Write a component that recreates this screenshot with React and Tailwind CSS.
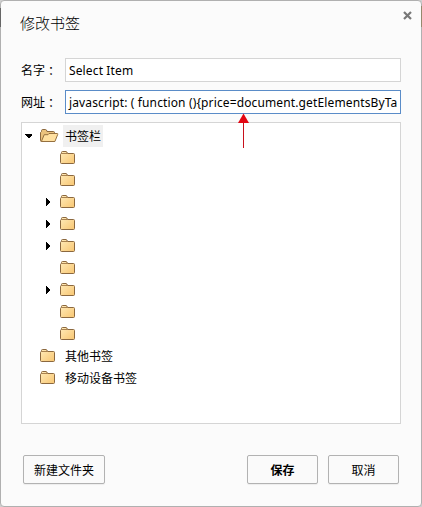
const cjk = "font-['Noto_Sans_CJK_SC',sans-serif]";

function Folder() {
  return (
    <svg width="16" height="16" viewBox="0 0 16 16" className="block shrink-0">
      <defs>
        <linearGradient id="folder" x1="0" y1="0" x2="1" y2="1">
          <stop offset="0" stopColor="#ffebb9" />
          <stop offset="1" stopColor="#f8c672" />
        </linearGradient>
      </defs>
      <path d="M1.5 3.5V2.5Q1.5 1.5 2.5 1.5H6Q7 1.5 7.5 3.5H13.5Q14.5 3.5 14.5 4.5V12.5Q14.5 13.5 13.5 13.5H1.5Q.5 13.5 .5 12.5V4.5Q.5 3.5 1.5 3.5Z" fill="url(#folder)" stroke="#8b683f" />
      <path d="M1.5 3.5H7.5" fill="none" stroke="#a98250" />
    </svg>
  );
}

function OpenFolder() {
  return (
    <svg width="19" height="16" viewBox="0 0 19 16" className="block shrink-0">
      <path d="M.5 12.5V4.5L1.5 3.5V2.5Q1.7 1.5 2.7 1.5H5.5Q6.7 1.5 7 3.5H13.5Q14.5 3.5 14.5 4.8V13.5H1.5Q.5 13.5 .5 12.5Z" fill="#eac27d" stroke="#8b683f" />
      <path d="M1.4 13.5L4.2 6.7H8L9 5.5H17.2Q18.1 5.5 17.7 6.5L14.9 13.5Z" fill="#ffe0a0" stroke="#95703f" strokeLinejoin="round" />
    </svg>
  );
}

function Caret({ open }) {
  return (
    <svg width="8" height="8" viewBox="0 0 8 8" shapeRendering="crispEdges" className="block shrink-0">
      <path d={open ? "M0 2H7V3L4 6H3L0 3Z" : "M2 0V8L6 4Z"} fill="#000" />
    </svg>
  );
}

const children = [false, false, true, true, true, false, true, false, false];

function Field({ label, value, active }) {
  return (
    <label className="flex h-6 items-center">
      <span className="w-11 shrink-0 whitespace-nowrap text-[12px] leading-6">
        {label}
        <span className="pl-[3px]">：</span>
      </span>
      <span className={`flex h-6 w-[336px] items-center overflow-hidden border bg-white pl-[3px] ${active ? "border-[#5a8cc8]" : "border-[#d5d5d5]"}`}>
        <span className="whitespace-pre pt-[2px] font-['Noto_Sans',sans-serif] text-[12px] font-normal leading-[22px] tracking-[0.13px]">{value}</span>
      </span>
    </label>
  );
}

function Button({ children, className }) {
  return (
    <button className={`flex h-[29px] items-center justify-center rounded-[2px] border border-[#b2b2b2] bg-[#fafafa] text-[12px] leading-none shadow-[0_1px_1px_rgba(0,0,0,0.06)] ${className}`}>
      {children}
    </button>
  );
}

export default function App() {
  return (
    <div className={`relative h-[507px] w-[422px] overflow-hidden bg-[#d0d0d0] text-black ${cjk}`}>
      <main className="flex h-[507px] w-[422px] flex-col rounded-[4px] border border-[#b0b0b0] bg-[#fbfbfb] pl-5">
        <header className="flex h-[57px] items-start justify-between pr-[9px]">
          <h1 className="-ml-px mt-[11px] text-[15px] font-light leading-[22px]">修改书签</h1>
          <svg width="9" height="9" viewBox="0 0 9 9" className="mt-[10px]">
            <path d="M1 1L8 8M8 1L1 8" stroke="#777" strokeWidth="2.2" />
          </svg>
        </header>
        <div className="flex flex-col gap-2">
          <Field label="名字" value="Select Item" />
          <Field label="网址" value="javascript: ( function (){price=document.getElementsByTa" active />
        </div>
        <section className="mt-2 h-[302px] w-[380px] border border-[#d5d5d5] bg-white pt-[2px] text-[12px]">
          <div className="flex h-[22px] items-center pl-[3px]">
            <Caret open />
            <span className="ml-[7px]"><OpenFolder /></span>
            <span className="ml-1 flex h-[22px] items-center bg-[#f0f0f0] px-[2px]">书签栏</span>
          </div>
          {children.map((expandable, i) => (
            <div key={i} className="flex h-[22px] items-center pl-[22px]">
              <span className="w-4">{expandable && <Caret />}</span>
              <Folder />
            </div>
          ))}
          <div className="flex h-[22px] items-center gap-[9px] pl-[18px]"><Folder />其他书签</div>
          <div className="flex h-[22px] items-center gap-[9px] pl-[18px]"><Folder />移动设备书签</div>
        </section>
        <footer className="mt-[31px] flex pl-[2px]">
          <Button className="w-[82px]">新建文件夹</Button>
          <Button className="ml-[142px] w-[71px] font-bold">保存</Button>
          <Button className="ml-[10px] w-[71px]">取消</Button>
        </footer>
      </main>
      <svg width="11" height="35" viewBox="0 0 11 35" className="absolute left-[238px] top-[113px]">
        <path d="M5.5 8V35" stroke="#c8101c" />
        <path d="M5.5 .5L11 10H0Z" fill="#e30613" />
      </svg>
      <span className="absolute left-0 top-2 h-[19px] w-px bg-[#666]" />
      <span className="absolute right-0 top-[6px] h-[21px] w-px bg-[#94896e]" />
    </div>
  );
}
